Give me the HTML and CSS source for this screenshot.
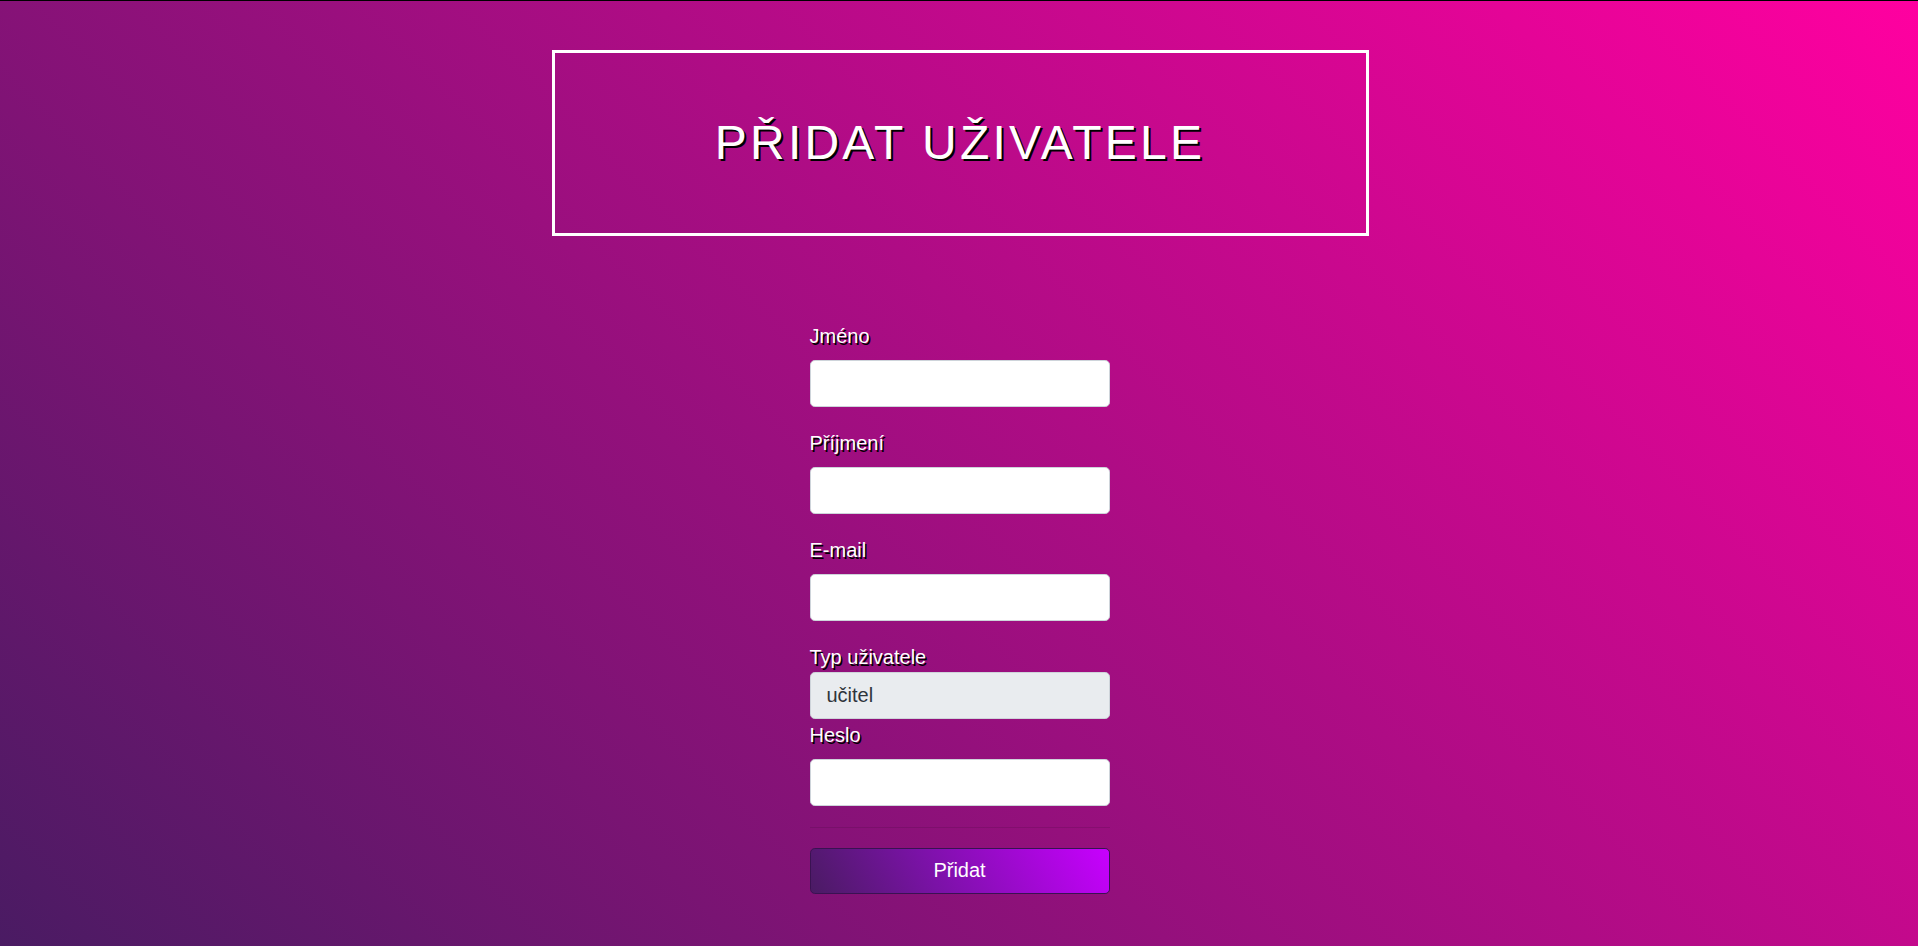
FILE: index.html
```html
<!DOCTYPE html>
<html lang="cs">
<head>
<meta charset="utf-8">
<title>Přidat uživatele</title>
<link rel="stylesheet" href="styles.css">
</head>
<body>
<div class="page">
  <header class="title-box">
    <h1 class="title">PŘIDAT UŽIVATELE</h1>
  </header>
  <form class="form">
    <div class="group">
      <label class="lbl" for="jmeno">Jméno</label>
      <input class="ctl" id="jmeno" type="text">
    </div>
    <div class="group">
      <label class="lbl" for="prijmeni">Příjmení</label>
      <input class="ctl" id="prijmeni" type="text">
    </div>
    <div class="group">
      <label class="lbl" for="email">E-mail</label>
      <input class="ctl" id="email" type="email">
    </div>
    <div class="group group-tight">
      <label class="lbl lbl-tight" for="typ">Typ uživatele</label>
      <select class="ctl ctl-ro" id="typ">
        <option>učitel</option>
      </select>
    </div>
    <div class="group">
      <label class="lbl" for="heslo">Heslo</label>
      <input class="ctl" id="heslo" type="password">
    </div>
    <hr class="sep">
    <button class="btn" type="button">Přidat</button>
  </form>
</div>
</body>
</html>
```

FILE: styles.css
```css
html, body {
  height: 100%;
}
body {
  margin: 0;
  box-sizing: border-box;
  border-top: 1px solid #000;
  background: linear-gradient(45deg, #4a1b63 0%, #ff00a0 100%) fixed;
  font-family: "Liberation Sans", Arial, sans-serif;
  color: #fff;
}
.page {
  display: flex;
  flex-direction: column;
  align-items: center;
  padding-top: 49px;
}
.title-box {
  box-sizing: border-box;
  width: 817px;
  border: 3px solid #fff;
  padding: 61px 0;
  margin-left: 2px;
}
.title {
  margin: 0;
  font-size: 48px;
  font-weight: 400;
  line-height: 57.6px;
  letter-spacing: 3.2px;
  text-align: center;
  text-shadow: 2px 2px 0 #000;
}
.form {
  width: 300px;
  margin: 85px 0 0 1px;
}
.group {
  margin-bottom: 21px;
}
.group-tight {
  margin-bottom: 1px;
}
.lbl {
  display: block;
  font-size: 20px;
  line-height: 30px;
  margin-bottom: 9px;
  text-shadow: 1.5px 1.5px 0 #000;
}
.lbl-tight {
  margin-bottom: 0;
}
.ctl {
  display: block;
  box-sizing: border-box;
  width: 100%;
  height: 47px;
  margin: 0;
  padding: 0 16px;
  border: 1px solid #ced4da;
  border-radius: 4.8px;
  background: #fff;
  font-family: "Liberation Sans", Arial, sans-serif;
  font-size: 20px;
  color: #495057;
  outline: none;
}
.ctl-ro {
  -webkit-appearance: none;
  appearance: none;
  background: #e9ecef;
  color: #2f353b;
}
.sep {
  margin: 20px 0;
  border: 0;
  border-top: 1px solid rgba(0, 0, 0, 0.1);
}
.btn {
  display: block;
  box-sizing: border-box;
  width: 100%;
  height: 46px;
  border: 1px solid #3a1252;
  border-radius: 4.8px;
  background: linear-gradient(60deg, #4a1b63 0%, #7a12a6 40%, #c800ff 100%);
  color: #fff;
  font-family: "Liberation Sans", Arial, sans-serif;
  font-size: 20px;
  cursor: pointer;
}
```
